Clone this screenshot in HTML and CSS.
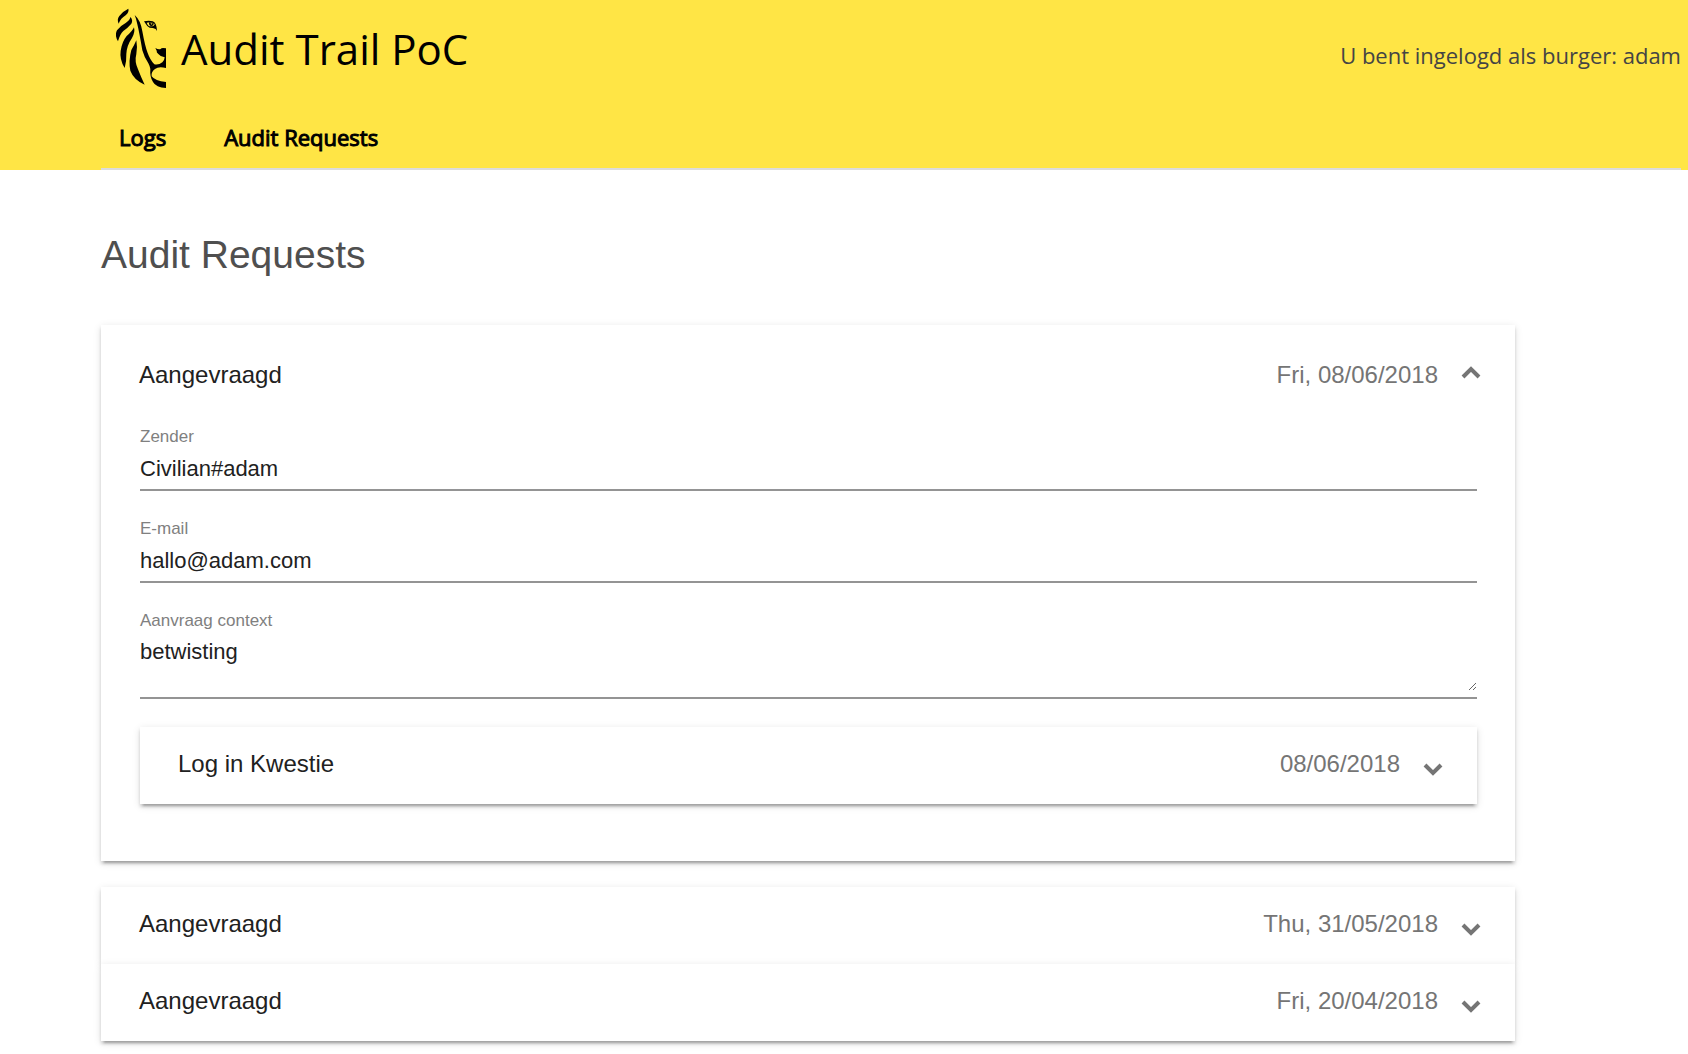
FILE: index.html
```html
<!DOCTYPE html>
<html lang="nl">
<head>
  <meta charset="utf-8">
  <meta name="viewport" content="width=device-width, initial-scale=1">
  <title>Audit Trail PoC</title>
  <link rel="stylesheet" href="styles.css">
</head>
<body>
  <header class="site-header">
    <div class="brand-row">
      <div class="brand">
        <svg class="brand-logo" viewBox="48 24 156 243" aria-hidden="true">
          <path d="M85 26 Q88 36 77 46 Q62 55 56 71 Q50 58 58 48 Q68 34 85 26Z"/>
          <path d="M91 51 Q100 59 94 71 Q83 84 70 93 Q60 102 54 124 Q43 106 51 91 Q61 77 78 68 Q90 60 91 51Z"/>
          <path d="M102 82 Q106 97 96 114 Q80 137 79 162 Q80 183 74 204 Q58 178 62 152 Q66 125 80 108 Q97 94 102 82Z"/>
          <path d="M109 121 Q113 142 109 162 Q103 185 114 208 Q122 229 134 254 Q101 239 91 212 Q85 183 94 150 Q103 135 109 121Z"/>
          <path d="M104 45 Q122 61 127 94 Q135 139 143 159 Q151 181 163 193 Q176 196 187 187 Q193 183 194 172 Q181 170 175 162 Q169 158 170 152 L166 144 Q175 149 182 147 Q184 142 198 145 L198 204 Q176 198 165 207 Q153 215 155 229 Q165 243 198 246 L198 264 Q168 263 159 246 Q149 231 151 207 Q149 197 145 190 Q132 170 127 151 Q118 98 112 73 Q108 54 104 45Z"/>
          <path fill-rule="evenodd" d="M132 64 Q147 61 158 64 Q170 68 171 93 L167 87 Q159 83 149 83 Q141 80 136 70Z M140 68 Q144 80 153 79 Q163 79 164 72 Q157 64 140 68Z"/>
          <path fill-rule="evenodd" d="M147 67 Q146 78 154 78 Q162 76 161 68Z M151 71 L157 69 L156 74Z"/>
        </svg>
        <span class="brand-name">Audit Trail PoC</span>
      </div>
      <p class="session">U bent ingelogd als burger: adam</p>
    </div>
    <nav class="tabs">
      <a class="tab" href="#logs">Logs</a>
      <a class="tab" href="#audit-requests">Audit Requests</a>
    </nav>
  </header>

  <main class="content" id="audit-requests">
    <h1 class="page-title">Audit Requests</h1>

    <section class="panel panel-open">
      <button class="panel-header" type="button" aria-expanded="true">
        <span class="panel-title">Aangevraagd</span>
        <span class="panel-date">Fri, 08/06/2018</span>
        <svg class="chevron" viewBox="0 0 18 24" aria-hidden="true"><path d="M1 14 L9 6 L17 14"/></svg>
      </button>
      <div class="panel-body">
        <div class="field">
          <label class="field-label" for="sender">Zender</label>
          <input class="field-input" id="sender" type="text" value="Civilian#adam" readonly>
        </div>
        <div class="field">
          <label class="field-label" for="email">E-mail</label>
          <input class="field-input" id="email" type="email" value="hallo@adam.com" readonly>
        </div>
        <div class="field">
          <label class="field-label" for="context">Aanvraag context</label>
          <div class="field-area-wrap">
            <textarea class="field-area" id="context" rows="2" readonly>betwisting</textarea>
          </div>
        </div>
        <section class="panel">
          <button class="panel-header" type="button" aria-expanded="false">
            <span class="panel-title">Log in Kwestie</span>
            <span class="panel-date">08/06/2018</span>
            <svg class="chevron" viewBox="0 0 18 24" aria-hidden="true"><path d="M1 13 L9 21 L17 13"/></svg>
          </button>
        </section>
      </div>
    </section>

    <div class="panel-group">
      <section class="panel">
        <button class="panel-header" type="button" aria-expanded="false">
          <span class="panel-title">Aangevraagd</span>
          <span class="panel-date">Thu, 31/05/2018</span>
          <svg class="chevron" viewBox="0 0 18 24" aria-hidden="true"><path d="M1 13 L9 21 L17 13"/></svg>
        </button>
      </section>
      <section class="panel">
        <button class="panel-header" type="button" aria-expanded="false">
          <span class="panel-title">Aangevraagd</span>
          <span class="panel-date">Fri, 20/04/2018</span>
          <svg class="chevron" viewBox="0 0 18 24" aria-hidden="true"><path d="M1 13 L9 21 L17 13"/></svg>
        </button>
      </section>
    </div>
  </main>
</body>
</html>
```

FILE: styles.css
```css
* {
  box-sizing: border-box;
}

body {
  margin: 0;
  background: #fff;
  color: #212121;
  font-family: "Liberation Sans", Arial, sans-serif;
}

.site-header {
  padding: 7px 7px 0 101px;
  background: #ffe545;
  font-family: "Open Sans", sans-serif;
}

.brand-row {
  display: flex;
  justify-content: space-between;
  align-items: center;
  height: 96px;
}

.brand {
  display: flex;
  align-items: center;
  gap: 13px;
  height: 84px;
  margin-bottom: 12px;
  padding-left: 15px;
}

.brand-logo {
  width: 52px;
  height: 81px;
  margin-bottom: 2px;
}

.brand-name {
  color: #000;
  font-size: 42px;
  line-height: 60px;
}

.session {
  margin: 0;
  color: #444;
  font-size: 22px;
  line-height: 32px;
}

.tabs {
  display: flex;
  gap: 58px;
  height: 67px;
  padding: 18px 18px 0;
  border-bottom: 2px solid #dcdcdc;
}

.tab {
  color: #000;
  font-size: 22px;
  line-height: 32px;
  text-decoration: none;
  -webkit-text-stroke: 1px #000;
}

.content {
  padding: 60px 173px 12px 101px;
}

.page-title {
  margin: 0 0 45px;
  color: #4f4f4f;
  font-size: 39px;
  font-weight: 400;
  line-height: 50px;
}

.panel {
  background: #fff;
  box-shadow:
    0 5px 2px -3px rgba(0, 0, 0, .2),
    0 3px 3px 0 rgba(0, 0, 0, .14),
    0 2px 8px 0 rgba(0, 0, 0, .12);
}

.panel-header {
  display: flex;
  align-items: center;
  width: 100%;
  height: 77px;
  padding: 0 35px 3px 38px;
  border: 0;
  background: #fff;
  font-family: inherit;
  font-size: 24px;
  line-height: 28px;
  text-align: left;
  cursor: pointer;
}

.panel-open > .panel-header {
  height: 102px;
}

.panel-title {
  flex: 1;
  color: #212121;
}

.panel-date {
  margin-right: 24px;
  color: #757575;
}

.chevron {
  flex: none;
  width: 18px;
  height: 24px;
  overflow: visible;
  fill: none;
  stroke: #757575;
  stroke-width: 4;
}

.panel-body {
  display: flex;
  flex-direction: column;
  gap: 28px;
  padding: 0 38px 57px 39px;
}

.field {
  display: flex;
  flex-direction: column;
  gap: 8px;
}

.field-label {
  color: #808080;
  font-size: 17px;
  line-height: 20px;
}

.field-input,
.field-area {
  display: block;
  width: 100%;
  margin: 0;
  padding: 0;
  border: 0;
  outline: 0;
  background: transparent;
  color: #212121;
  font-family: inherit;
  font-size: 22px;
  line-height: 26px;
}

.field-input {
  height: 36px;
  padding-bottom: 6px;
  border-bottom: 2px solid #949494;
}

.field-area-wrap {
  padding-bottom: 6px;
  border-bottom: 2px solid #949494;
}

.field-area {
  height: 52px;
  overflow: auto;
  resize: vertical;
}

.panel-group {
  margin-top: 26px;
}
```
